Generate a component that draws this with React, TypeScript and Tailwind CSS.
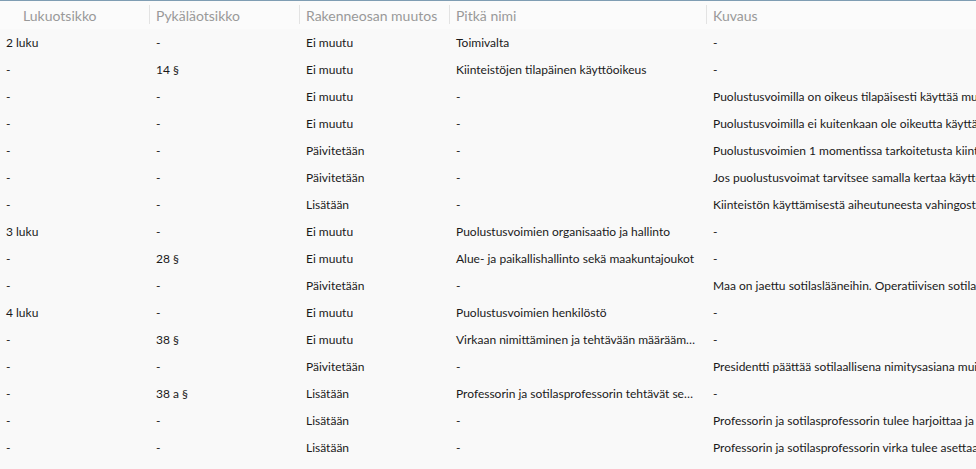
import React from "react";

// Read-only list view of structural changes, Windows-style details view.

const FONT = "font-['Lato','Segoe_UI','Noto_Sans',sans-serif]";

type Row = [string, string, string, string, string];

const ROWS: Row[] = [
  ["2 luku", "-", "Ei muutu", "Toimivalta", "-"],
  ["-", "14 §", "Ei muutu", "Kiinteistöjen tilapäinen käyttöoikeus", "-"],
  ["-", "-", "Ei muutu", "-", "Puolustusvoimilla on oikeus tilapäisesti käyttää muiden omistamia kiinteistöjä"],
  ["-", "-", "Ei muutu", "-", "Puolustusvoimilla ei kuitenkaan ole oikeutta käyttää kotirauhan suojaamia tiloja"],
  ["-", "-", "Päivitetään", "-", "Puolustusvoimien 1 momentissa tarkoitetusta kiinteistön käytöstä"],
  ["-", "-", "Päivitetään", "-", "Jos puolustusvoimat tarvitsee samalla kertaa käyttöönsä useita kiinteistöjä"],
  ["-", "-", "Lisätään", "-", "Kiinteistön käyttämisestä aiheutuneesta vahingosta suoritetaan korvaus"],
  ["3 luku", "-", "Ei muutu", "Puolustusvoimien organisaatio ja hallinto", "-"],
  ["-", "28 §", "Ei muutu", "Alue- ja paikallishallinto sekä maakuntajoukot", "-"],
  ["-", "-", "Päivitetään", "-", "Maa on jaettu sotilaslääneihin. Operatiivisen sotilasläänin esikunta"],
  ["4 luku", "-", "Ei muutu", "Puolustusvoimien henkilöstö", "-"],
  ["-", "38 §", "Ei muutu", "Virkaan nimittäminen ja tehtävään määrääminen", "-"],
  ["-", "-", "Päivitetään", "-", "Presidentti päättää sotilaallisena nimitysasiana muiden kuin"],
  ["-", "38 a §", "Lisätään", "Professorin ja sotilasprofessorin tehtävät sekä kelpoisuus", "-"],
  ["-", "-", "Lisätään", "-", "Professorin ja sotilasprofessorin tulee harjoittaa ja seurata tieteellistä tutkimusta"],
  ["-", "-", "Lisätään", "-", "Professorin ja sotilasprofessorin virka tulee asettaa haettavaksi"],
];

const HEADERS = ["Lukuotsikko", "Pykäläotsikko", "Rakenneosan muutos", "Pitkä nimi", "Kuvaus"];

const GRID = "grid grid-cols-[149px_150px_150px_257px_1fr]";

function HeaderCell({ label, first }: { label: string; first?: boolean }) {
  return (
    <div className="relative flex items-center h-full min-w-0">
      {!first && <div className="absolute left-0 top-[4px] h-[19px] w-px bg-[#e3e3e3]" />}
      <span className={`${first ? "pl-[23px]" : "pl-[7px]"} text-[14px] text-[#999999] whitespace-nowrap`}>
        {label}
      </span>
    </div>
  );
}

export default function App() {
  return (
    <div className={`${FONT} w-[976px] h-[469px] overflow-hidden bg-[#f9f9f9] border-t border-[#7f9db3]`}>
      <div className={`${GRID} h-[28px] bg-[#fbfbfb]`}>
        {HEADERS.map((h, i) => (
          <HeaderCell key={h} label={h} first={i === 0} />
        ))}
      </div>
      <div className="flex flex-col">
        {ROWS.map((row, r) => (
          <div key={r} className={`${GRID} h-[27px] items-center text-[12px] text-[#1a1a1a]`}>
            {row.map((cell, c) => (
              <div
                key={c}
                className={`min-w-0 whitespace-nowrap overflow-hidden ${
                  c === 0 ? "pl-[6px]" : "pl-[7px]"
                } ${c === 3 ? "text-ellipsis pr-[10px]" : ""}`}
              >
                {cell}
              </div>
            ))}
          </div>
        ))}
      </div>
    </div>
  );
}
